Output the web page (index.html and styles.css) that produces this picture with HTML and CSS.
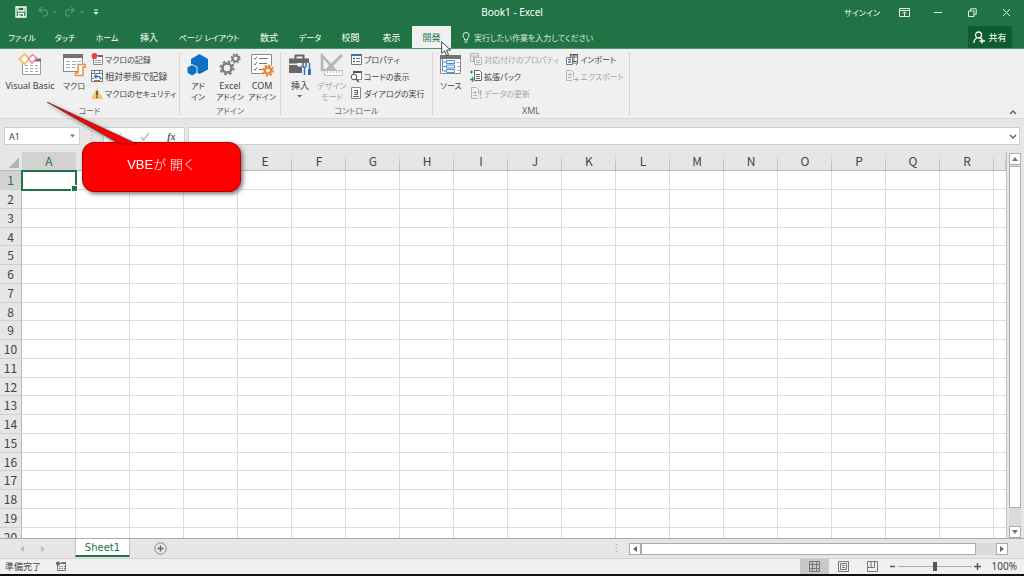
FILE: index.html
```html
<!DOCTYPE html>
<html lang="ja">
<head>
<meta charset="utf-8">
<meta name="viewport" content="width=device-width, initial-scale=1">
<title>Book1 - Excel</title>
<link rel="stylesheet" href="styles.css">
</head>
<body>
<div class="app">
  <header class="titlebar">
    <div class="quick">
      <button class="qbtn" aria-label="上書き保存"><svg width="12" height="12" viewBox="0 0 12 12"><path d="M1 1h10v10H1z M3 1v4h6V1 M3.500 11V7.500h5V11 M5 9v2" fill="none" stroke="#fff" stroke-width="1.300"/></svg></button>
      <button class="qbtn dim" aria-label="元に戻す"><svg width="20" height="12" viewBox="0 0 20 12"><path d="M1.500 4h6a3 3 0 0 1 0 6H6M5 1L1.800 4L5 7" fill="none" stroke="#4f9070" stroke-width="1.400"/><path d="M16 5h4l-2 2.500z" fill="#4f9070"/></svg></button>
      <button class="qbtn dim" aria-label="やり直し"><svg width="20" height="12" viewBox="0 0 20 12"><path d="M10.500 4h-6a3 3 0 0 0 0 6H6M7 1l3.200 3L7 7" fill="none" stroke="#4f9070" stroke-width="1.400"/><path d="M16 5h4l-2 2.500z" fill="#4f9070"/></svg></button>
      <button class="qbtn" aria-label="ツールバーのカスタマイズ"><svg width="6" height="8" viewBox="0 0 6 8"><path d="M1 2h4" stroke="#fff"/><path d="M.5 4h5L3 6.800z" fill="#fff"/></svg></button>
    </div>
    <h1 class="doc">Book1 - Excel</h1>
    <div class="window">
      <button class="signin">サインイン</button>
      <button class="wbtn" aria-label="リボンの表示オプション"><svg width="11" height="9" viewBox="0 0 11 9"><path d="M.5.5h10v8H.5zM.5 2.500h10M5.500 8V4M3.500 5.700l2-2 2 2" fill="none" stroke="#e3efe8"/></svg></button>
      <button class="wbtn" aria-label="最小化"><svg width="9" height="9" viewBox="0 0 9 9"><path d="M0 4.500h8" stroke="#e3efe8"/></svg></button>
      <button class="wbtn" aria-label="元に戻す"><svg width="9" height="9" viewBox="0 0 9 9"><path d="M.5 3h5.500v5.500H.5zM2.500 3V.8h5.700v5.500H6" fill="none" stroke="#e3efe8"/></svg></button>
      <button class="wbtn" aria-label="閉じる"><svg width="9" height="9" viewBox="0 0 9 9"><path d="M1 1l7 7M8 1L1 8" stroke="#e3efe8"/></svg></button>
    </div>
  </header>

  <nav class="tabs">
    <div class="tablist">
      <button class="tab kana">ファイル</button><button class="tab kana">タッチ</button><button class="tab kana">ホーム</button><button class="tab">挿入</button><button class="tab kana">ページ レイアウト</button><button class="tab">数式</button><button class="tab kana">データ</button><button class="tab">校閲</button><button class="tab">表示</button><button class="tab active">開発</button>
    </div>
    <button class="tell"><svg width="8" height="11" viewBox="0 0 8 11"><path d="M2.500 8V6.500Q1 5.500 1 3.500a3 3 0 0 1 6 0Q7 5.500 5.500 6.500V8zM2.500 10h3" fill="none" stroke="#e3efe8"/></svg><span class="kana">実行したい作業を入力してください</span></button>
    <button class="share"><svg width="12" height="13" viewBox="0 0 12 13"><circle cx="5.500" cy="4" r="3" fill="none" stroke="#fff" stroke-width="1.300"/><path d="M1 12q0-4 3-5M7 7l1.500 1M9 7.500v5M6.500 10H12" fill="none" stroke="#fff" stroke-width="1.300"/></svg><span>共有</span></button>
  </nav>

  <section class="ribbon">
    <div class="group g-code">
      <div class="tools">
        <button class="big vb"><svg width="24" height="24" viewBox="0 0 24 24"><path d="M4.500 6.500h18v15h-18z" fill="#fff" stroke="#9a9a9a"/><path d="M16 5.500h7v3h-7z" fill="#737373"/><path d="M7 12.500h3m2 0h3m2 0h3M7 15.500h3m2 0h3m2 0h3M7 18.500h3m2 0h3m2 0h3" stroke="#a6a6a6"/><path d="M6.500 1L11.500 6l-5 5-5-5z" fill="#fff" stroke="#efc274" stroke-width="2"/><path d="M14.500 1.500L18.500 5l-4.500 5-3.500-4z" fill="#fff" stroke="#e9899c" stroke-width="1.500"/></svg><span>Visual Basic</span></button>
        <button class="big macro"><svg width="24" height="24" viewBox="0 0 24 24"><path d="M1.500 2.500h19v16h-19z" fill="#fff" stroke="#8a8a8a"/><path d="M1 1h20v4H1z" fill="#737373"/><path d="M4 8.500h4m2 0h4m2 0h3M4 11.500h4m2 0h4M4 14.500h4m2 0h3" stroke="#a6a6a6"/><path d="M16 11.500h7.500v2.500H21v8.500h-7.500v-2.500H16z" fill="#fff" stroke="#ed8a43" stroke-width="1.500"/></svg><span class="kana">マクロ</span></button>
        <div class="list">
          <button class="item"><svg width="13" height="13" viewBox="0 0 13 13"><path d="M2.500 2.500h9v9h-9z" fill="#fff" stroke="#8a8a8a"/><path d="M7 2h5v2H7z" fill="#666"/><path d="M4 7.500h2m1 0h3M4 9.500h2m1 0h3" stroke="#999"/><circle cx="3.500" cy="3" r="2.900" fill="#dc4a35"/></svg><span class="kana">マクロの記録</span></button>
          <button class="item"><svg width="13" height="13" viewBox="0 0 13 13"><path d="M.5.5h11v11H.5zM3.500 0v12M8.500 0v12M0 3.500h12M0 8.500h12" fill="#fff" stroke="#777"/><path d="M3 4h7v6H3z" fill="#fff"/><path d="M3.500 6.500h4q2 0 2 3M5.500 4.500l-2 2 2 2" fill="none" stroke="#3573b9" stroke-width="1.300"/><path d="M4 10.500h4" stroke="#d65d43"/></svg><span>相対参照で記録</span></button>
          <button class="item"><svg width="13" height="13" viewBox="0 0 13 13"><path d="M6 1L12 12H0z" fill="#f2c474"/><path d="M6 4v4.500M6 9.500v1.500" stroke="#333" stroke-width="1.400"/></svg><span class="kana">マクロのセキュリティ</span></button>
        </div>
      </div>
      <div class="caption">コード</div>
    </div>
    <div class="group g-addin">
      <div class="tools">
        <button class="big"><svg width="24" height="24" viewBox="0 0 24 24"><path d="M13.500 1l8.500 5v10.500L13.500 21 5 16.500V6z" fill="#0f6fc6"/><path d="M6 11.500l5 2.700V20l-5 3-5-3v-5.800z" fill="#0f6fc6" stroke="#f0f0f0"/></svg><span class="kana">アド<br>イン</span></button>
        <button class="big"><svg width="24" height="24" viewBox="0 0 24 24"><circle cx="9" cy="15" r="4.500" fill="none" stroke="#7d7d7d" stroke-width="2.600"/><circle cx="9" cy="15" r="6.500" fill="none" stroke="#7d7d7d" stroke-width="2" stroke-dasharray="2.600 2.500"/><circle cx="17.500" cy="5.500" r="2.800" fill="none" stroke="#7d7d7d" stroke-width="1.800"/><circle cx="17.500" cy="5.500" r="4.300" fill="none" stroke="#7d7d7d" stroke-width="1.500" stroke-dasharray="1.800 1.600"/></svg><span>Excel<br><i class="kana">アドイン</i></span></button>
        <button class="big"><svg width="24" height="24" viewBox="0 0 24 24"><path d="M1.500 1.500h20v19h-20z" fill="#fff" stroke="#8a8a8a"/><path d="M4 5l1 1.500L7 3.500M4 10.500L5 12l2-3M4 16l1 1.500L7 14.500M9 5.500h9M9 10.500h8M9 16.500h3" fill="none" stroke="#777"/><circle cx="18" cy="17.500" r="6" fill="#f0f0f0"/><circle cx="18" cy="17.500" r="3.200" fill="none" stroke="#ed8336" stroke-width="2.400"/><circle cx="18" cy="17.500" r="5" fill="none" stroke="#ed8336" stroke-width="2" stroke-dasharray="2 1.900"/></svg><span>COM<br><i class="kana">アドイン</i></span></button>
      </div>
      <div class="caption">アドイン</div>
    </div>
    <div class="group g-control">
      <div class="tools">
        <button class="big"><svg width="24" height="24" viewBox="0 0 24 24"><path d="M7.500 6V2.500h8V6" fill="none" stroke="#666" stroke-width="2"/><path d="M1 5.500h20v5H1zM1 12h20v8H1z" fill="#666"/><path d="M9.500 10h4v3.500h-4z" fill="#fff"/><path d="M14 10h10v13H14z" fill="#f0f0f0"/><path d="M15 10v3q0 1.500 1.500 1.500T18 13v-3M16.500 14v8" fill="none" stroke="#3573b9" stroke-width="1.500"/><path d="M21.500 10v6" stroke="#3573b9" stroke-width="1.500"/><path d="M21.500 16v6" stroke="#3573b9" stroke-width="3"/></svg><span>挿入<br><svg width="5" height="9" viewBox="0 0 5 9"><path d="M0 4h5L2.500 6.500z" fill="#666"/></svg></span></button>
        <button class="big off"><svg width="24" height="24" viewBox="0 0 24 24"><path d="M2 2.500V17H15z" fill="none" stroke="#b5b5b5" stroke-width="2.500"/><path d="M21 1l2 2L10 16l-4 2 1.500-4z" fill="#b5b5b5"/><path d="M4.500 17.500h18v5h-18zM7.500 18v2m3-2v2m3-2v2m3-2v2m3-2v2" fill="#fff" stroke="#c5b8cb"/></svg><span class="kana">デザイン<br>モード</span></button>
        <div class="list">
          <button class="item"><svg width="13" height="13" viewBox="0 0 13 13"><path d="M1.500 1.500h10v10h-10z" fill="#fff" stroke="#777"/><path d="M1 1h11v2H1z" fill="#3573b9"/><path d="M3 5.500h2M3 8.500h2" stroke="#3573b9" stroke-width="1.500"/><path d="M6 5.500h4M6 8.500h4" stroke="#777"/></svg><span class="kana">プロパティ</span></button>
          <button class="item"><svg width="13" height="13" viewBox="0 0 13 13"><path d="M3.500 1.500h8v8h-8z" fill="#fff" stroke="#888"/><path d="M3 1h9v2H3z" fill="#555"/><circle cx="4" cy="7" r="2.800" fill="#fff" stroke="#555"/><path d="M6 9l3 3" stroke="#555" stroke-width="1.500"/></svg><span class="kana">コードの表示</span></button>
          <button class="item"><svg width="13" height="13" viewBox="0 0 13 13"><path d="M1.500.5h9v11h-9z" fill="#fff" stroke="#888"/><path d="M4 3.500h4M4 5.500h4M4 7.500h4M3 9.500h6M7.500 3v5" stroke="#666"/></svg><span class="kana">ダイアログの実行</span></button>
        </div>
      </div>
      <div class="caption">コントロール</div>
    </div>
    <div class="group g-xml">
      <div class="tools">
        <button class="big"><svg width="24" height="24" viewBox="0 0 24 24"><path d="M1.500 3.500h20v17h-20z" fill="#fff" stroke="#888"/><path d="M1 2h21v4H1z" fill="#737373"/><path d="M3.500 6v12H8M3.500 9H8M3.500 13.500H8" fill="none" stroke="#4c91cf"/><path d="M7.500 7.500h8v3h-8zM7.500 12h8v3h-8zM7.500 16.500h8v3h-8z" fill="#e9f3fc" stroke="#4c91cf"/><path d="M18 9.500h3M18 13.500h3M18 17.500h3" stroke="#aaa"/></svg><span class="kana">ソース</span></button>
        <div class="list">
          <button class="item off"><svg width="13" height="13" viewBox="0 0 13 13"><path d="M.5.5h8v8h-8zM1 3h7M3.500 3v5" fill="none" stroke="#b5b5b5"/><path d="M4.500 4.500h7v7h-7zM6 7.500h4M6 9.500h4" fill="#f0f0f0" stroke="#b5b5b5"/></svg><span class="kana">対応付けのプロパティ</span></button>
          <button class="item"><svg width="13" height="13" viewBox="0 0 13 13"><path d="M4.500.5h5l2 2v8h-7zM6 4.500h4M6 6.500h4M6 8.500h4" fill="#fff" stroke="#666"/><path d="M0 2h3M1.500.5v3" stroke="#3573b9"/><path d="M0 9.500h5M2.500 7v5" stroke="#399b62" stroke-width="1.300"/></svg><span class="kana">拡張パック</span></button>
          <button class="item off"><svg width="13" height="13" viewBox="0 0 13 13"><path d="M8 11.500H1.500V.5h5l2 2V7M3 5.500h4M3 8.500h4M5 4v3" fill="none" stroke="#b5b5b5"/><path d="M10.500 3v5.500M10.500 10v1.500" stroke="#aaa" stroke-width="1.500"/></svg><span class="kana">データの更新</span></button>
        </div>
        <div class="list second">
          <button class="item"><svg width="13" height="13" viewBox="0 0 13 13"><path d="M4.500 1.500h7v7h-7zM4 4h8M8 2v6" fill="#fff" stroke="#666"/><path d="M4 1h8v1.500H4z" fill="#555"/><path d="M.5 4.500h6v7h-6z" fill="#fff" stroke="#777"/><path d="M2 6.500h3M2 9h3" stroke="#3573b9" stroke-width="1.500"/><path d="M7 10h5M10 8l2 2-2 2" fill="none" stroke="#399b62"/></svg><span class="kana">インポート</span></button>
          <button class="item off"><svg width="13" height="13" viewBox="0 0 13 13"><path d="M6 10.500H.5V.5h5l2 2V7M2 4.500h4M2 7.500h4M4 3v3" fill="none" stroke="#b5b5b5"/><path d="M7 9.500h5M10 7.500l2 2-2 2" fill="none" stroke="#aaa"/></svg><span class="kana">エクスポート</span></button>
        </div>
      </div>
      <div class="caption latin">XML</div>
    </div>
    <button class="collapse" aria-label="リボンを折りたたむ"><svg width="8" height="5" viewBox="0 0 8 5"><path d="M1 4l3-3 3 3" fill="none" stroke="#666" stroke-width="1.500"/></svg></button>
  </section>

  <section class="formula">
    <div class="namebox"><input class="field" aria-label="名前ボックス" value="A1"><button class="plain" aria-label="名前の一覧"><svg width="7" height="5" viewBox="0 0 7 5"><path d="M1 .5h5L3.500 3.500z" fill="#777"/></svg></button></div>
    <svg class="grip" width="3" height="12" viewBox="0 0 3 12"><path d="M1.500 1v11" stroke="#aaa" stroke-dasharray="1 2.500"/></svg>
    <div class="fxbox">
      <button class="plain" aria-label="キャンセル"><svg width="9" height="9" viewBox="0 0 9 9"><path d="M1 1l7 7M8 1L1 8" stroke="#bbb"/></svg></button>
      <button class="plain" aria-label="入力"><svg width="10" height="9" viewBox="0 0 10 9"><path d="M1 5l2.500 3L9 1" fill="none" stroke="#bbb" stroke-width="1.500"/></svg></button>
      <button class="plain fx" aria-label="関数の挿入">fx</button>
    </div>
    <div class="formbox"><input class="field" aria-label="数式バー"><button class="plain" aria-label="数式バーの展開"><svg width="8" height="5" viewBox="0 0 8 5"><path d="M1 1l3 3 3-3" fill="none" stroke="#666" stroke-width="1.500"/></svg></button></div>
  </section>

  <main class="work">
    <div class="sheet"><table class="grid" id="grid"></table></div>
    <div class="vscroll">
      <button class="sbtn" aria-label="上へ"><svg width="6" height="4" viewBox="0 0 6 4"><path d="M0 4h6L3 0z" fill="#777"/></svg></button>
      <div class="vthumb"></div>
      <div class="vspace"></div>
      <button class="sbtn" aria-label="下へ"><svg width="6" height="4" viewBox="0 0 6 4"><path d="M0 0h6L3 4z" fill="#777"/></svg></button>
    </div>
  </main>

  <section class="sheetbar">
    <div class="sheetnav">
      <button class="plain" aria-label="前のシート"><svg width="4" height="6" viewBox="0 0 4 6"><path d="M4 0v6L0 3z" fill="#bbb"/></svg></button>
      <button class="plain" aria-label="次のシート"><svg width="4" height="6" viewBox="0 0 4 6"><path d="M0 0v6l4-3z" fill="#bbb"/></svg></button>
    </div>
    <button class="sheettab">Sheet1</button>
    <button class="plain add" aria-label="新しいシート"><svg width="13" height="13" viewBox="0 0 13 13"><circle cx="6.500" cy="6.500" r="5.700" fill="none" stroke="#888"/><path d="M3.500 6.500h6M6.500 3.500v6" stroke="#666" stroke-width="1.500"/></svg></button>
    <svg class="grip" width="3" height="9" viewBox="0 0 3 9"><path d="M1.500 0v9" stroke="#aaa" stroke-width="1.500" stroke-dasharray="1 2.500"/></svg>
    <div class="hscroll">
      <button class="sbtn" aria-label="左へ"><svg width="4" height="6" viewBox="0 0 4 6"><path d="M4 0v6L0 3z" fill="#666"/></svg></button>
      <div class="hthumb"></div>
      <div class="hspace"></div>
      <button class="sbtn" aria-label="右へ"><svg width="4" height="6" viewBox="0 0 4 6"><path d="M0 0v6l4-3z" fill="#666"/></svg></button>
    </div>
  </section>

  <footer class="status">
    <span class="ready">準備完了</span>
    <button class="plain" aria-label="マクロの記録"><svg width="11" height="11" viewBox="0 0 11 11"><path d="M1.500 2.500h8v7h-8zM3 5.500h1.500m1 0h1.500m1 0h1M3 7.500h1.500m1 0h1.500m1 0h1" fill="none" stroke="#777"/><path d="M5 1h5v2H5z" fill="#777"/><circle cx="2" cy="2.500" r="2" fill="#666"/></svg></button>
    <div class="views">
      <button class="view on" aria-label="標準"><svg width="11" height="11" viewBox="0 0 11 11"><path d="M.5.500h10v10H.5zM3.500 0v11M7.500 0v11M0 3.500h11M0 7.500h11" fill="none" stroke="#777"/></svg></button>
      <button class="view" aria-label="ページ レイアウト"><svg width="11" height="11" viewBox="0 0 11 11"><path d="M.5.500h10v10H.5zM2.500 2.500h6v6h-6zM4 4.500h3M4 6.500h3" fill="none" stroke="#777"/></svg></button>
      <button class="view" aria-label="改ページ プレビュー"><svg width="11" height="11" viewBox="0 0 11 11"><path d="M.5.500h10v10H.5zM.5 6.500h7V0M4 0v6" fill="none" stroke="#777"/></svg></button>
    </div>
    <button class="plain zoombtn" aria-label="縮小"><svg width="7" height="7" viewBox="0 0 7 7"><path d="M1 3.500h5" stroke="#555" stroke-width="1.500"/></svg></button>
    <input class="zoom" type="range" min="0" max="100" value="50" aria-label="ズーム">
    <button class="plain zoombtn" aria-label="拡大"><svg width="7" height="7" viewBox="0 0 7 7"><path d="M0 3.500h7M3.500 0v7" stroke="#555" stroke-width="1.500"/></svg></button>
    <span class="percent">100%</span>
  </footer>

  <div class="callout">
    <svg class="tail" width="96" height="44" viewBox="0 0 96 44"><path d="M0 0L90 42H73z" fill="#f00" stroke="#4a2020" stroke-width=".6"/></svg>
    <div class="bubble">VBEが 開く</div>
  </div>
  <svg class="pointer" width="12" height="16" viewBox="0 0 12 16"><path d="M.7.800v11.500L3.500 9.800l2 4.700 2-.9-2-4.500h4z" fill="#fff" stroke="#333" stroke-width=".9"/></svg>
</div>
<script src="grid.js"></script>
</body>
</html>
```
FILE: styles.css
```css
* { box-sizing: border-box; }
body { margin: 0; background: #e6e6e6; color: #444; }
body, button, input { font-family: "Noto Sans", "Noto Sans CJK JP", sans-serif; font-size: 9px; line-height: 11px; font-feature-settings: "palt"; }
button { margin: 0; padding: 0; border: 0; background: none; color: inherit; white-space: nowrap; }
svg { flex: none; }
i { font-style: normal; }
.kana { font-size: 8px; }
.app { position: relative; display: flex; flex-direction: column; height: 100vh; overflow: hidden; }

.titlebar { display: grid; grid-template-columns: 1fr auto 1fr; align-items: center; height: 26px; flex: none; padding-bottom: 2px; background: #217346; color: #fff; }
.quick { display: flex; align-items: center; gap: 7px; padding-left: 15px; }
.qbtn { display: flex; }
.qbtn:first-child { margin-right: 3px; }
.qbtn:last-child { margin-left: 2px; }
.doc { margin: 0; font-size: 10px; line-height: 14px; font-weight: 400; }
.window { display: flex; align-items: center; justify-content: flex-end; padding-right: 1px; }
.signin { margin-right: 7px; font-size: 8px; }
.wbtn { display: flex; width: 34px; justify-content: center; }

.tabs { display: flex; height: 23px; flex: none; border-bottom: 1px solid #4d9069; background: #217346; color: #fff; }
.tablist { display: grid; grid-template-columns: 44px 42px 42px 42px 78px 42px 40px 41px 41px 39px; }
.tab.active { background: #f0f0f0; color: #217346; }
.tell { display: flex; align-items: center; gap: 4px; margin-left: 11px; color: #d8e8df; }
.share { display: flex; align-items: center; justify-content: center; gap: 3px; width: 44px; margin: 0 12px 0 auto; background: #0e5c2f; }

.ribbon { display: flex; height: 70px; flex: none; border-bottom: 1px solid #d8d8d8; background: #f0f0f0; }
.group { display: flex; flex-direction: column; border-right: 1px solid #d8d8d8; margin: 3px 0 2px; }
.g-code { width: 180px; }
.g-addin { width: 101px; }
.g-control { width: 152px; }
.g-xml { width: 197px; }
.tools { display: flex; flex: 1; align-items: flex-start; }
.big { display: flex; flex-direction: column; align-items: center; gap: 3px; width: 32px; padding-top: 1px; }
.big span { display: block; line-height: 11px; }
.big.vb { width: 60px; }
.big.macro { width: 28px; }
.g-addin .tools { padding-left: 2px; }
.g-control .tools { padding-left: 3px; }
.g-xml .tools { padding-left: 2px; }
.off { color: #a6a6a6; }
.list { display: flex; flex-direction: column; gap: 4px; padding: 1px 0 0 4px; }
.g-control .list { padding-left: 2px; }
.g-xml .list { padding-left: 3px; }
.g-xml .list.second { padding-left: 7px; }
.g-code .list { padding-left: 3px; }
.item { display: flex; align-items: center; gap: 1px; height: 13px; text-align: left; }
.caption { line-height: 10px; font-size: 8px; text-align: center; color: #666; }
.caption.latin { font-size: 9px; }
.collapse { align-self: flex-end; margin: 0 7px 3px auto; display: flex; }

.formula { display: flex; align-items: center; flex: none; height: 33px; padding: 8px 4px 7px; }
.namebox, .fxbox, .formbox { display: flex; align-items: center; height: 18px; border: 1px solid #d0d0d0; background: #fff; }
.namebox { width: 76px; padding-right: 3px; }
.field { flex: 1; min-width: 0; padding: 0 4px; border: 0; outline: 0; background: none; color: #444; }
.plain { display: flex; align-items: center; justify-content: center; }
.formula .grip { margin: 0 10px; }
.fxbox { width: 82px; justify-content: space-around; padding-left: 2px; }
.fx { font: italic bold 10px "Liberation Serif", serif; color: #555; }
.formbox { flex: 1; margin-left: 3px; padding-right: 2px; }

.work { display: flex; flex: 1; min-height: 0; border-bottom: 1px solid #ababab; }
.sheet { flex: 1; min-width: 0; overflow: hidden; border-right: 1px solid #c0c0c0; }
.grid { width: 100%; table-layout: fixed; border-collapse: separate; border-spacing: 0; background: #fff; }
.grid tr { height: 19px; }
.grid tbody tr:nth-child(4n) { height: 18px; }
.grid th, .grid td { width: 54px; padding: 0; border-right: 1px solid #dcdcdc; border-bottom: 1px solid #dcdcdc; }
.grid th { font: 400 12px/14px "Noto Sans CJK JP", sans-serif; text-align: center; background: #e6e6e6; color: #444; border-color: #bababa; }
.grid thead th { border-right: 0; background: linear-gradient(#e6e6e6, #b5b5b5) right / 1px 100% no-repeat #e6e6e6; }
.grid tr > :first-child { width: 22px; }
.grid tr > :last-child { width: auto; border-right: 0; }
.grid thead th.corner { background: linear-gradient(135deg, #e6e6e6 60%, #b4b4b4 60%) 6px 4px / 13px 12px no-repeat #e6e6e6; }
.grid tbody th { border-bottom-color: #d0d0d0; }
.grid th.sel, .grid thead th.sel { background: #d2d2d2; color: #217346; }
.grid td.current { position: relative; outline: 2px solid #217346; outline-offset: -1px; }
.grid td.current::after { content: ""; position: absolute; right: -3px; bottom: -3px; width: 5px; height: 5px; border: 1px solid #fff; background: #217346; }
.vscroll { display: flex; flex-direction: column; width: 12px; margin: 1px 3px 0 2px; background: #dbdbdb; }
.sbtn { display: flex; align-items: center; justify-content: center; border: 1px solid #ababab; background: #fff; }
.vscroll .sbtn { height: 12px; }
.vthumb { flex: 19; margin-top: 1px; border: 1px solid #ababab; background: #fff; }
.vspace { flex: 1; }

.sheetbar { display: flex; align-items: center; flex: none; height: 20px; border-bottom: 1px solid #d0d0d0; }
.sheetnav { display: flex; gap: 17px; width: 75px; padding-left: 20px; }
.sheettab { align-self: flex-start; width: 55px; height: 18px; border: 1px solid #c0c0c0; border-top: 0; border-bottom: 2px solid #217346; background: #fff; color: #217346; font-family: "DejaVu Sans", sans-serif; font-size: 10px; }
.add { margin-left: 24px; }
.sheetbar .grip { margin-left: auto; margin-right: 11px; }
.hscroll { display: flex; width: 37%; height: 12px; margin-right: 16px; background: #dbdbdb; }
.hscroll .sbtn { width: 12px; }
.hthumb { flex: 17; border: 1px solid #ababab; background: #fff; }
.hspace { flex: 1; }

.status { display: flex; align-items: center; flex: none; height: 17px; padding: 0 7px 0 5px; border-bottom: 2px solid #111; background: #f0f0f0; }
.ready { margin-right: 15px; }
.views { display: flex; align-self: stretch; margin-left: auto; }
.view { display: flex; align-items: center; justify-content: center; width: 29px; }
.view.on { background: #c8c8c8; }
.zoombtn { margin: 0 2px; }
.zoom { width: 74px; height: 12px; margin: 0; appearance: none; background: linear-gradient(#aaa, #aaa) center / 100% 1px no-repeat; }
.zoom::-webkit-slider-thumb { appearance: none; width: 4px; height: 9px; background: #555; }
.percent { margin-left: 9px; font-size: 10px; }

.callout { position: absolute; left: 47px; top: 102px; width: 194px; filter: drop-shadow(2px 2px 2px #777); }
.tail { display: block; }
.bubble { width: 159px; height: 50px; margin: -4px 0 0 35px; border: 1px solid #b00000; border-radius: 12px; background: #f00; color: #fff; font: 300 14px/44px "Liberation Sans", "Noto Sans CJK JP", sans-serif; font-size: 13px; text-align: center; }
.pointer { position: absolute; left: 441px; top: 41px; }
```
FILE: grid.js
```js
const letters = [..."ABCDEFGHIJKLMNOPQR"];
const cell = (row, i) => `<td${row === 1 && i === 0 ? ' class="current"' : ""}></td>`;
let html = '<thead><tr><th class="corner"></th>';
html += letters.map((l, i) => `<th scope="col"${i === 0 ? ' class="sel"' : ""}>${l}</th>`).join("");
html += "<th></th></tr></thead><tbody>";
for (let row = 1; row <= 20; row++) {
  html += `<tr><th scope="row"${row === 1 ? ' class="sel"' : ""}>${row}</th>`;
  html += letters.map((l, i) => cell(row, i)).join("") + "<td></td></tr>";
}
document.getElementById("grid").innerHTML = html + "</tbody>";
```
